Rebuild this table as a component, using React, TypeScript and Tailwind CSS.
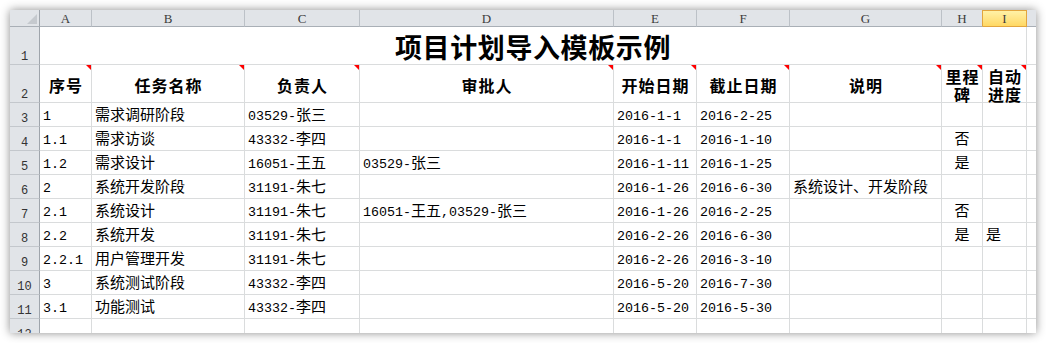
import React from "react";

type Row = string[];

const DATA: Row[] = [
  ["1", "需求调研阶段", "03529-张三", "", "2016-1-1", "2016-2-25", "", "", ""],
  ["1.1", "需求访谈", "43332-李四", "", "2016-1-1", "2016-1-10", "", "否", ""],
  ["1.2", "需求设计", "16051-王五", "03529-张三", "2016-1-11", "2016-1-25", "", "是", ""],
  ["2", "系统开发阶段", "31191-朱七", "", "2016-1-26", "2016-6-30", "系统设计、开发阶段", "", ""],
  ["2.1", "系统设计", "31191-朱七", "16051-王五,03529-张三", "2016-1-26", "2016-2-25", "", "否", ""],
  ["2.2", "系统开发", "31191-朱七", "", "2016-2-26", "2016-6-30", "", "是", "是"],
  ["2.2.1", "用户管理开发", "31191-朱七", "", "2016-2-26", "2016-3-10", "", "", ""],
  ["3", "系统测试阶段", "43332-李四", "", "2016-5-20", "2016-7-30", "", "", ""],
  ["3.1", "功能测试", "43332-李四", "", "2016-5-20", "2016-5-30", "", "", ""],
  ["", "", "", "", "", "", "", "", ""],
];

const LETTERS = ["A", "B", "C", "D", "E", "F", "G", "H", "I"];

function Mixed({ text }: { text: string }) {
  const parts = text.match(/[\x00-\x7f]+|[^\x00-\x7f]+/g) || [];
  return (
    <>
      {parts.map((p, i) =>
        /^[\x00-\x7f]/.test(p) ? (
          <span key={i} className="font-['Liberation_Mono',monospace] text-[13.33px] leading-[12px]">
            {p}
          </span>
        ) : (
          <span key={i} className="font-['Noto_Sans_CJK_SC',sans-serif] text-[15px] leading-[18px]">
            {p}
          </span>
        )
      )}
    </>
  );
}

function RedTip() {
  return (
    <div className="absolute top-0 right-0 w-0 h-0 border-l-[5px] border-l-transparent border-t-[5px] border-t-[#ff0000]" />
  );
}

function RowHead({ n }: { n: number }) {
  return (
    <div className="flex items-end justify-center bg-[#e1e4e8] border-r border-b border-r-[#9fa5ac] border-b-[#c3c7cc] text-[12px] leading-[14px] text-[#333333] font-['Liberation_Mono',monospace]">
      {n}
    </div>
  );
}

export default function App() {
  return (
    <div className="w-[1046px] h-[343px] bg-white p-[10px]">
      <div className="w-[1026px] h-[323px] overflow-hidden bg-white shadow-[0_0_9px_rgba(0,0,0,0.45)]">
        <div className="grid grid-cols-[30px_52px_153px_115px_254px_83px_93px_152px_41px_44px_9px] grid-rows-[17px_38px_38px_repeat(10,24px)]">
          {/* column header row */}
          <div className="relative bg-[#e1e4e8] border-r border-b border-r-[#9fa5ac] border-b-[#a9afb6]">
            <div className="absolute bottom-[2px] right-[2px] w-0 h-0 border-l-[10px] border-l-transparent border-b-[10px] border-b-[#c5c9ce]" />
          </div>
          {LETTERS.map((l) =>
            l === "I" ? (
              <div
                key={l}
                className="flex items-center justify-center bg-linear-to-b from-[#fff1a6] to-[#ffd862] border-t border-r border-b border-[#e2a53e] text-[13px] leading-[15px] text-[#3c3c3c] font-['Liberation_Serif',serif]"
              >
                {l}
              </div>
            ) : (
              <div
                key={l}
                className={
                  l === "H"
                    ? "flex items-center justify-center bg-[#e1e4e8] border-r border-b border-r-[#e2a53e] border-b-[#a9afb6] text-[13px] leading-[15px] text-[#3c3c3c] font-['Liberation_Serif',serif]"
                    : "flex items-center justify-center bg-[#e1e4e8] border-r border-b border-r-[#bcc1c7] border-b-[#a9afb6] text-[13px] leading-[15px] text-[#3c3c3c] font-['Liberation_Serif',serif]"
                }
              >
                {l}
              </div>
            )
          )}
          <div className="bg-[#e1e4e8] border-b border-b-[#a9afb6]" />

          {/* row 1: title */}
          <RowHead n={1} />
          <div className="col-span-9 flex items-end justify-center pb-[4px] border-r border-b border-[#dadcdd] font-['Noto_Sans_CJK_SC',sans-serif] text-[27px] leading-[27px] font-bold tracking-[0.6px] text-black">
            项目计划导入模板示例
          </div>
          <div className="border-b border-[#dadcdd]" />

          {/* row 2: headers */}
          <RowHead n={2} />
          {["序号", "任务名称", "负责人", "审批人", "开始日期", "截止日期", "说明"].map((h) => (
            <div
              key={h}
              className="relative flex items-center justify-center pt-[2px] border-r border-b border-[#dadcdd] font-['Noto_Sans_CJK_SC',sans-serif] text-[16px] leading-[18px] font-bold tracking-[1px] pl-[1px] text-black"
            >
              {h}
              <RedTip />
            </div>
          ))}
          <div className="relative flex items-center justify-center pt-[2px] border-r border-b border-[#dadcdd] font-['Noto_Sans_CJK_SC',sans-serif] text-[16px] leading-[18px] font-bold tracking-[1px] pl-[1px] text-black text-center">
            <div>
              里程
              <br />碑
            </div>
            <RedTip />
          </div>
          <div className="relative flex items-center justify-center pt-[2px] border-r border-b border-[#dadcdd] font-['Noto_Sans_CJK_SC',sans-serif] text-[16px] leading-[18px] font-bold tracking-[1px] pl-[1px] text-black text-center">
            <div>
              自动
              <br />进度
            </div>
            <RedTip />
          </div>
          <div className="border-b border-[#dadcdd]" />

          {/* data rows */}
          {DATA.map((row, ri) => (
            <React.Fragment key={ri}>
              <RowHead n={ri + 3} />
              {row.map((cell, ci) => (
                <div
                  key={ci}
                  className={
                    ci === 7
                      ? "flex items-end justify-center pb-[3px] whitespace-nowrap border-r border-b border-[#dadcdd] font-['Noto_Sans_CJK_SC',sans-serif] text-[15px] leading-[18px] text-black"
                      : "flex items-end pl-[3px] pb-[3px] whitespace-nowrap border-r border-b border-[#dadcdd] font-['Noto_Sans_CJK_SC',sans-serif] text-[15px] leading-[18px] text-black"
                  }
                >
                  <span>
                    <Mixed text={cell} />
                  </span>
                </div>
              ))}
              <div className="border-b border-[#dadcdd]" />
            </React.Fragment>
          ))}
        </div>
      </div>
    </div>
  );
}
